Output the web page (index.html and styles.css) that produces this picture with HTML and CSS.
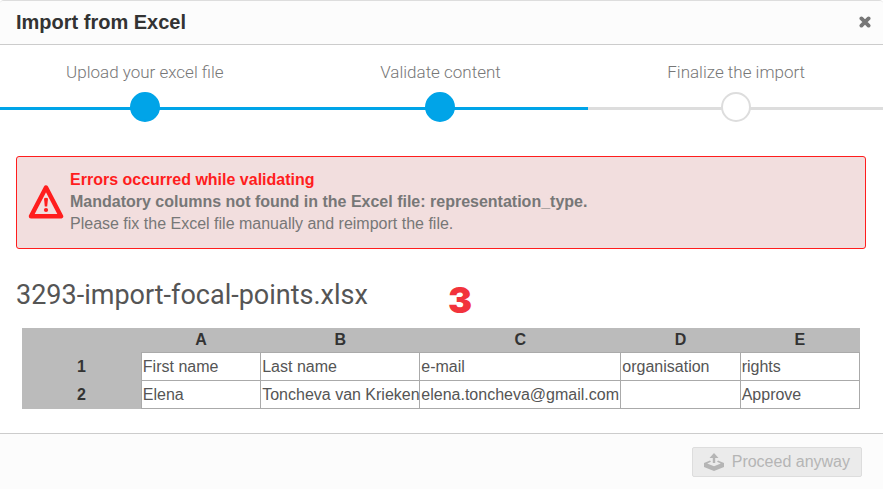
FILE: index.html
```html
<!DOCTYPE html>
<html lang="en">
<head>
    <meta charset="UTF-8">
    <meta name="viewport" content="width=device-width, initial-scale=1.0">
    <title>Import from Excel</title>
    <link rel="stylesheet" href="styles.css">
</head>
<body>
    <div class="modal">
        <header class="modal-header">
            <h1>Import from Excel</h1>
            <button type="button" class="close-btn" aria-label="Close">
                <svg width="12" height="12" viewBox="0 0 12 12" aria-hidden="true">
                    <path d="M2.4 2.4L9.6 9.6M9.6 2.4L2.4 9.6" fill="none" stroke="#777" stroke-width="3.8" stroke-linecap="round"/>
                </svg>
            </button>
        </header>

        <main class="modal-body">
            <ol class="steps">
                <li class="step done"><span>Upload your excel file</span></li>
                <li class="step done"><span>Validate content</span></li>
                <li class="step"><span>Finalize the import</span></li>
            </ol>

            <div class="alert" role="alert">
                <svg width="36" height="36" viewBox="0 0 36 36" aria-hidden="true">
                    <path d="M18 3.5L33 32.3H3Z" fill="none" stroke="#ff1d1d" stroke-width="4.5" stroke-linejoin="round"/>
                    <path d="M16 14.5Q18 13 20 14.5L19.2 22.5H16.8Z" fill="#ff1d1d"/>
                    <circle cx="18" cy="26" r="2.1" fill="#ff1d1d"/>
                </svg>
                <div class="alert-text">
                    <strong class="alert-title">Errors occurred while validating</strong>
                    <strong>Mandatory columns not found in the Excel file: representation_type.</strong>
                    <p>Please fix the Excel file manually and reimport the file.</p>
                </div>
            </div>

            <div class="file-row">
                <h2>3293-import-focal-points.xlsx</h2>
                <span class="marker">3</span>
            </div>

            <div class="sheet-wrap">
                <table class="sheet">
                    <colgroup>
                        <col span="2">
                        <col class="col-name">
                        <col class="col-email">
                        <col span="2">
                    </colgroup>
                    <thead>
                        <tr><th></th><th scope="col">A</th><th scope="col">B</th><th scope="col">C</th><th scope="col">D</th><th scope="col">E</th></tr>
                    </thead>
                    <tbody>
                        <tr>
                            <th scope="row">1</th>
                            <td>First name</td>
                            <td>Last name</td>
                            <td>e-mail</td>
                            <td>organisation</td>
                            <td>rights</td>
                        </tr>
                        <tr>
                            <th scope="row">2</th>
                            <td>Elena</td>
                            <td>Toncheva van Krieken</td>
                            <td>elena.toncheva@gmail.com</td>
                            <td></td>
                            <td>Approve</td>
                        </tr>
                    </tbody>
                </table>
            </div>
        </main>

        <footer class="modal-footer">
            <button type="button" class="proceed-btn" disabled>
                <svg width="20" height="18" viewBox="0 0 20 18" aria-hidden="true">
                    <path d="M10 0L14.5 5H11.2V10H8.8V5H5.5Z" fill="#b5b5b5"/>
                    <path d="M6 7.5L0 10V14L10 18L20 14V10L14 7.5L13 8.8L16.8 10.4L10 13.2L3.2 10.4L7 8.8Z" fill="#b5b5b5"/>
                </svg>
                Proceed anyway
            </button>
        </footer>
    </div>
</body>
</html>
```
FILE: styles.css
```css
*, *::after {
    box-sizing: border-box;
}
body {
    margin: 0;
    font-family: "Liberation Sans", Arial, sans-serif;
    font-size: 16px;
    line-height: 22px;
    color: #555;
    background-color: #fff;
}
h1, h2, p, ol {
    margin: 0;
    padding: 0;
}
.modal {
    display: flex;
    flex-direction: column;
    min-height: 100vh;
    border-top: 1px solid #ddd;
    border-radius: 4px 4px 0 0;
    overflow: hidden;
}
.modal-header {
    display: flex;
    align-items: center;
    justify-content: space-between;
    height: 44px;
    padding: 0 12px 1px 16px;
    background-color: #fcfcfc;
    border-bottom: 1px solid #ccc;
}
.modal-header h1 {
    font-size: 20px;
    color: #333;
}
.close-btn {
    display: flex;
    padding: 0;
    border: none;
    background: none;
    cursor: pointer;
}
.modal-body {
    flex: 1;
}

/* progress */
.steps {
    display: grid;
    grid-template-columns: repeat(3, 1fr);
    margin: 0 -1px 0 -3px;
    padding-top: 16px;
    list-style: none;
    background: linear-gradient(to right, #00a4e8 66.6%, #ddd 66.6%) 0 62px / 100% 3px no-repeat;
}
.step {
    display: flex;
    flex-direction: column;
    align-items: center;
    gap: 9px;
    font-family: Roboto, sans-serif;
    font-weight: 300;
    font-size: 17px;
    color: #777;
}
.step::after {
    content: "";
    width: 30px;
    height: 30px;
    border: 2px solid #ddd;
    border-radius: 50%;
    background-color: #fff;
}
.step.done::after {
    border-color: #00a4e8;
    background-color: #00a4e8;
}

.alert {
    display: flex;
    align-items: center;
    gap: 6px;
    margin: 34px 17px 0 16px;
    padding: 12px 11px 13px;
    border: 1px solid #ff1d1d;
    border-radius: 3px;
    background-color: #f2dede;
    color: #777;
}
.alert-text strong {
    display: block;
}
.alert-text .alert-title {
    color: #ff1d1d;
}

.file-row {
    display: flex;
    align-items: flex-start;
    gap: 80px;
    margin: 28px 16px 0;
}
.file-row h2 {
    font-family: Roboto, sans-serif;
    font-weight: 400;
    font-size: 27px;
    line-height: 36px;
}
.marker {
    padding-top: 5px;
    font-family: Inter, sans-serif;
    font-weight: 900;
    font-size: 36px;
    line-height: 36px;
    color: #f2333c;
}

.sheet-wrap {
    margin: 10px 23px 24px 22px;
}
.sheet {
    width: 100%;
    table-layout: fixed;
    border-collapse: collapse;
}
.sheet .col-name {
    width: 19%;
}
.sheet .col-email {
    width: 24%;
}
.sheet th {
    padding: 1px 2px;
    background-color: #bbb;
    color: #333;
}
.sheet td {
    height: 28px;
    padding: 1px 0 1px 1px;
    border: 1px solid #aaa;
    white-space: nowrap;
}

.modal-footer {
    display: flex;
    justify-content: flex-end;
    padding: 13px 21px 12px;
    background-color: #fcfcfc;
    border-top: 1px solid #ccc;
}
.proceed-btn {
    display: flex;
    align-items: center;
    gap: 8px;
    height: 30px;
    padding: 0 11px;
    border: 1px solid #ddd;
    border-radius: 2px;
    background-color: #ebebeb;
    font: inherit;
    color: #b5b5b5;
}
```
